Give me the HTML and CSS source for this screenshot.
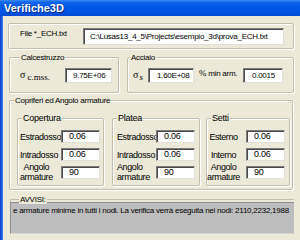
FILE: index.html
```html
<!DOCTYPE html>
<html>
<head>
<meta charset="utf-8">
<title>Verifiche3D</title>
<link rel="stylesheet" href="styles.css">
</head>
<body>
<div class="window">
  <div class="titlebar">Verifiche3D</div>
  <div class="main">
    <div class="edge"></div>
    <div class="client">
      <div class="group filegroup">
        <span class="file-lbl">File *_ECH.txt</span>
        <div class="tb tb-file">C:\Lusas13_4_5\Projects\esempio_3d\prova_ECH.txt</div>
      </div>

      <div class="row2">
        <div class="group g-calc">
          <div class="gtitle">Calcestruzzo</div>
          <div class="grow">
            <span class="sig sig-c">σ<span class="sub">c.mss.</span></span>
            <div class="tb tb-calc">9.75E+06</div>
          </div>
        </div>
        <div class="group g-acc">
          <div class="gtitle">Acciaio</div>
          <div class="grow">
            <span class="sig sig-s">σ<span class="sub sub-s">s</span></span>
            <div class="tb tb-acc">1.60E+08</div>
            <span class="pct"><span class="pc">%</span> min arm.</span>
            <div class="tb tb-pct">0.0015</div>
          </div>
        </div>
      </div>

      <div class="group g-cop">
        <div class="gtitle">Copriferi ed Angolo armature</div>
        <div class="subs">
          <div class="group sub sub-a">
            <div class="gtitle">Copertura</div>
            <div class="field f1"><span class="lbl">Estradosso</span><div class="tb tb-s">0.06</div></div>
            <div class="field f2"><span class="lbl">Intradosso</span><div class="tb tb-s">0.06</div></div>
            <div class="field f3"><span class="lbl"><span class="two">Angolo<br>armature</span></span><div class="tb tb-s">90</div></div>
          </div>
          <div class="group sub sub-b">
            <div class="gtitle">Platea</div>
            <div class="field f1"><span class="lbl">Estradosso</span><div class="tb tb-s">0.06</div></div>
            <div class="field f2"><span class="lbl">Intradosso</span><div class="tb tb-s">0.06</div></div>
            <div class="field f3"><span class="lbl">Angolo<br>armature</span><div class="tb tb-s">90</div></div>
          </div>
          <div class="group sub sub-c">
            <div class="gtitle">Setti</div>
            <div class="field f1"><span class="lbl">Esterno</span><div class="tb tb-s">0.06</div></div>
            <div class="field f2"><span class="lbl">Interno</span><div class="tb tb-s">0.06</div></div>
            <div class="field f3"><span class="lbl">Angolo<br>armature</span><div class="tb tb-s">90</div></div>
          </div>
        </div>
      </div>

      <div class="avvisi">
        <div class="gtitle">AVVISI:</div>
        <div class="msg">e armature minime in tutti i nodi. La verifica verrà eseguita nei nodi: 2110,2232,1988</div>
      </div>
    </div>
  </div>
</div>
</body>
</html>
```

FILE: styles.css
```css
* { box-sizing: border-box; }
html, body { margin: 0; padding: 0; }
body {
  width: 300px;
  height: 240px;
  overflow: hidden;
  background: #ECE9D8;
  font-family: "Liberation Sans", Arial, sans-serif;
  font-size: 8px;
  letter-spacing: -0.25px;
  color: #000;
}
.window {
  width: 300px;
  height: 240px;
  display: flex;
  flex-direction: column;
}
.titlebar {
  flex: none;
  height: 16px;
  padding-left: 4px;
  background: linear-gradient(to bottom, #3d8df8 0px, #1466ee 2px, #0058e6 6px, #0054e2 12px, #004bd4 16px);
  color: #fff;
  font-weight: bold;
  font-size: 11px;
  line-height: 16px;
  letter-spacing: 0;
  text-shadow: 1px 1px 0 #0b2a8a;
}
.main {
  flex: 1;
  display: flex;
  min-height: 0;
}
.edge {
  flex: none;
  width: 3px;
  background: linear-gradient(to right, #0b3fc4, #1d5ee4 60%, #4d86ef);
}
.client {
  flex: 1;
  padding: 7px 0 0 5px;
}

.group {
  border: 1px solid #c2bfae;
  border-radius: 2px;
  box-shadow: inset 1px 1px 0 #fff, 1px 1px 0 #fff;
}
.gtitle {
  position: relative;
  width: max-content;
  height: 9px;
  margin-top: -5px;
  padding: 0 1px;
  line-height: 9px;
  background: #ECE9D8;
}

.tb {
  background: #fff;
  border: 1px solid;
  border-color: #7c7c7c #e2e0d8 #e2e0d8 #7c7c7c;
  box-shadow: inset 1px 1px 0 #4a4a4a;
  white-space: nowrap;
  overflow: hidden;
}

/* File */
.filegroup {
  width: 286px;
  height: 26px;
  display: flex;
  align-items: flex-start;
  padding: 4px 0 0 11px;
}
.file-lbl {
  width: 63px;
  margin-top: 1px;
  line-height: 10px;
}
.tb-file {
  width: 201px;
  height: 17px;
  line-height: 15px;
  padding-left: 6px;
}

/* Row 2 */
.row2 {
  display: flex;
  margin: 8px 0 0 1px;
}
.g-calc { width: 110px; height: 36px; }
.g-acc { width: 167px; height: 36px; margin-left: 8px; }
.g-calc .gtitle { margin-left: 10px; }
.g-acc .gtitle { margin-left: 2px; }
.grow {
  display: flex;
  align-items: center;
  padding: 6px 0 0 10px;
}
.g-acc .grow { padding-left: 5px; }
.sig {
  font-family: "Liberation Serif", "DejaVu Serif", serif;
  font-size: 10px;
  letter-spacing: 0;
  line-height: 12px;
  margin-top: -1px;
}
.sub {
  font-size: 9px;
  margin-left: 2px;
  position: relative;
  top: 2px;
}
.sub-s { margin-left: 1px; font-style: italic; }
.sig-c { width: 45px; }
.sig-s { width: 15px; }
.tb-calc { width: 47px; height: 15px; line-height: 13px; padding-left: 7px; }
.tb-acc { width: 46px; height: 15px; line-height: 13px; padding-left: 8px; }
.pct {
  width: 44px;
  margin-left: 5px;
  margin-top: -4px;
  line-height: 10px;
}
.pc {
  font-family: "Liberation Serif", serif;
  font-size: 9px;
}
.tb-pct { width: 40px; height: 15px; line-height: 13px; padding-left: 8px; }

/* Copriferi */
.g-cop {
  width: 284px;
  height: 90px;
  margin: 7px 0 0 1px;
}
.g-cop > .gtitle { margin-left: 4px; }
.subs {
  display: flex;
  padding: 11px 0 0 5px;
}
.sub { height: 68px; }
.sub-a { width: 87px; padding-left: 2px; }
.sub-b { width: 88px; margin-left: 8px; padding-left: 4px; }
.sub-c { width: 84px; margin-left: 6px; padding-left: 0; }
.sub-a .gtitle { margin-left: 2px; }
.sub-b .gtitle { margin-left: 0; }
.sub-c .gtitle { margin-left: 4px; }
.field {
  display: flex;
  align-items: center;
}
.f1 { margin-top: 7px; }
.f2 { margin-top: 5px; }
.f3 { margin-top: 1px; }
.lbl { line-height: 10px; letter-spacing: -0.4px; white-space: nowrap; }
.sub-a .lbl { width: 41px; }
.sub-b .lbl { width: 39px; }
.sub-c .lbl { width: 33px; margin-right: 6px; text-align: center; }
.two { display: inline-block; text-align: center; }
.tb-s {
  width: 39px;
  height: 13px;
  line-height: 11px;
  padding-left: 7px;
}

/* Avvisi */
.avvisi {
  width: 284px;
  margin: 9px 0 0 2px;
  border-top: 1px solid #c2bfae;
  border-left: 1px solid #c2bfae;
}
.avvisi .gtitle { margin-left: 8px; }
.msg {
  width: 284px;
  height: 32px;
  margin: -2px 0 0 -1px;
  padding: 3px 0 0 2px;
  background: #bdbdbd;
  border-top: 1px solid #8e8e8e;
  border-left: 1px solid #8e8e8e;
  border-bottom: 1px solid #d6d6d6;
  line-height: 10px;
  white-space: nowrap;
  overflow: hidden;
}
```
